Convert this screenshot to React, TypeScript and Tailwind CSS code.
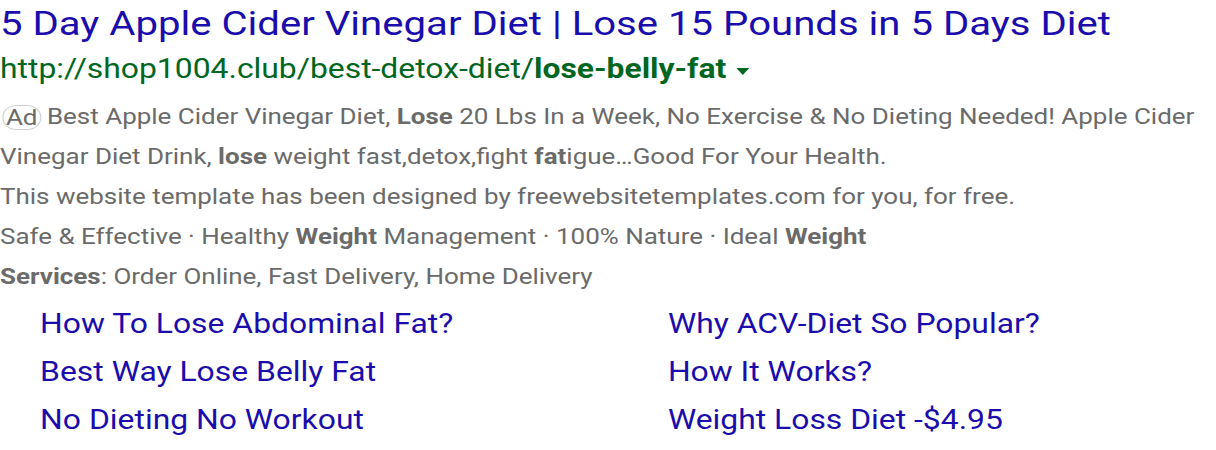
import React from "react";

const B = ({ children }: { children: React.ReactNode }) => (
  <span className="font-bold">{children}</span>
);

export default function App() {
  return (
    <div className="w-[1216px] h-[450px] bg-white overflow-hidden">
      <div
        className="w-[1030px] origin-left scale-x-[1.18]"
        style={{ fontFamily: "Roboto, 'Liberation Sans', sans-serif" }}
      >
        <div className="text-[34px] leading-[46px] text-[#1a0dab] whitespace-nowrap">
          5 Day Apple Cider Vinegar Diet | Lose 15 Pounds in 5 Days Diet
        </div>
        <div className="flex items-center text-[27px] leading-[46px] text-[#006621] whitespace-nowrap">
          <span>
            http://shop1004.club/best-detox-diet/<B>lose-belly-fat</B>
          </span>
          <svg width="11" height="7" viewBox="0 0 11 7" className="ml-[8px] mt-[4px]">
            <path d="M0 0 L11 0 L5.5 7 Z" fill="#006621" />
          </svg>
        </div>
        <div className="mt-[5px] text-[22px] leading-[40px] text-[#6a6a6a] whitespace-nowrap">
          <div className="flex items-center">
            <span className="inline-block border border-[#d0d0d0] rounded-[12px] px-[2px] leading-[23px] mr-[5px] ml-[2px]">Ad</span>
            <span>
              Best Apple Cider Vinegar Diet, <B>Lose</B> 20 Lbs In a Week, No Exercise &amp; No Dieting Needed! Apple Cider
            </span>
          </div>
          <div>
            Vinegar Diet Drink, <B>lose</B> weight fast,detox,fight <B>fat</B>igue…Good For Your Health.
          </div>
          <div>This website template has been designed by freewebsitetemplates.com for you, for free.</div>
          <div>
            Safe &amp; Effective · Healthy <B>Weight</B> Management · 100% Nature · Ideal <B>Weight</B>
          </div>
          <div>
            <B>Services</B>: Order Online, Fast Delivery, Home Delivery
          </div>
        </div>
        <div className="mt-[3px] grid grid-cols-[532px_1fr] pl-[34px] text-[27px] leading-[48px] text-[#1a0dab] whitespace-nowrap">
          <div>How To Lose Abdominal Fat?</div>
          <div>Why ACV-Diet So Popular?</div>
          <div>Best Way Lose Belly Fat</div>
          <div>How It Works?</div>
          <div>No Dieting No Workout</div>
          <div>Weight Loss Diet -$4.95</div>
        </div>
      </div>
    </div>
  );
}
